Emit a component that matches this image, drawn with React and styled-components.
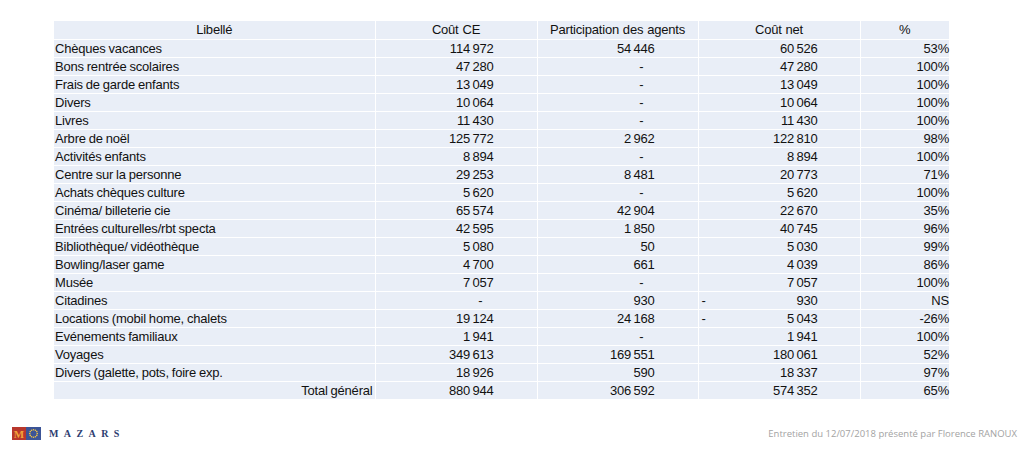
import React from "react";
import styled, { createGlobalStyle } from "styled-components";

const Global = createGlobalStyle`
  html, body { margin: 0; padding: 0; background: #ffffff; }
  body { font-family: "Liberation Sans", Arial, sans-serif; }
`;

const Page = styled.div`
  width: 1024px;
  height: 451px;
  box-sizing: border-box;
  padding: 21px 0 0 0;
  display: flex;
  flex-direction: column;
  overflow: hidden;
`;

const TableWrap = styled.div`
  padding-left: 54px;
`;

const Table = styled.table`
  border-collapse: collapse;
  table-layout: fixed;
  width: 895px;
  font-family: "Liberation Sans", Arial, sans-serif;
  font-size: 13px;
  letter-spacing: -0.2px;
  color: #111111;
`;

const Row = styled.tr`
  height: 18px;
`;

const Cell = styled.td`
  background: #e9eef7;
  border: 1px solid #ffffff;
  border-top: 0;
  padding: 0 ${(p) => p.$pr ?? 0}px 0 ${(p) => p.$pl ?? 0}px;
  height: 17px;
  line-height: 17px;
  text-align: ${(p) => p.$align || "left"};
  white-space: nowrap;
  overflow: visible;
  word-spacing: ${(p) => (p.$num ? "-1px" : "-0.5px")};
  &:first-child { border-left: 0; }
  &:last-child { border-right: 0; }
`;

const HeadCell = styled(Cell).attrs({ as: "th" })`
  font-weight: normal;
  text-align: center;
  word-spacing: 0.5px;
`;

const Dash = styled.span`
  display: inline-block;
  margin-right: 11px;
`;

const Neg = styled.div`
  display: flex;
  justify-content: space-between;
  padding-left: 3px;
`;

const Footer = styled.div`
  margin-top: 27px;
  display: flex;
  align-items: center;
  justify-content: space-between;
  padding: 0 7px 0 12px;
`;

const Logo = styled.div`
  display: flex;
  align-items: center;
  gap: 8px;
`;

const LogoWord = styled.span`
  font-family: "Liberation Serif", "Times New Roman", serif;
  font-weight: bold;
  font-size: 10px;
  letter-spacing: 5.4px;
  color: #2d3d70;
`;

const Credit = styled.span`
  font-family: "Open Sans", "Liberation Sans", sans-serif;
  font-size: 9.5px;
  color: #a3a3a3;
`;

const rows = [
  ["Chèques vacances", "114 972", "54 446", "60 526", "53%"],
  ["Bons rentrée scolaires", "47 280", "-", "47 280", "100%"],
  ["Frais de garde enfants", "13 049", "-", "13 049", "100%"],
  ["Divers", "10 064", "-", "10 064", "100%"],
  ["Livres", "11 430", "-", "11 430", "100%"],
  ["Arbre de noël", "125 772", "2 962", "122 810", "98%"],
  ["Activités enfants", "8 894", "-", "8 894", "100%"],
  ["Centre sur la personne", "29 253", "8 481", "20 773", "71%"],
  ["Achats chèques culture", "5 620", "-", "5 620", "100%"],
  ["Cinéma/ billeterie cie", "65 574", "42 904", "22 670", "35%"],
  ["Entrées culturelles/rbt specta", "42 595", "1 850", "40 745", "96%"],
  ["Bibliothèque/ vidéothèque", "5 080", "50", "5 030", "99%"],
  ["Bowling/laser game", "4 700", "661", "4 039", "86%"],
  ["Musée", "7 057", "-", "7 057", "100%"],
  ["Citadines", "-", "930", "-930", "NS"],
  ["Locations (mobil home, chalets", "19 124", "24 168", "-5 043", "-26%"],
  ["Evénements familiaux", "1 941", "-", "1 941", "100%"],
  ["Voyages", "349 613", "169 551", "180 061", "52%"],
  ["Divers (galette, pots, foire exp.", "18 926", "590", "18 337", "97%"],
];

function Num({ v }) {
  if (v === "-") return <Dash>-</Dash>;
  if (v.startsWith("-")) {
    return (
      <Neg>
        <span>-</span>
        <span>{v.slice(1)}</span>
      </Neg>
    );
  }
  return v;
}

function MazarsMark() {
  const stars = Array.from({ length: 12 }, (_, i) => {
    const a = (i / 12) * Math.PI * 2;
    return [21.5 + Math.cos(a) * 3.8, 6.5 + Math.sin(a) * 3.8];
  });
  return (
    <svg width="29" height="13" viewBox="0 0 29 13">
      <rect x="0" y="0" width="14" height="13" fill="#b8372c" />
      <rect x="14" y="0" width="15" height="13" fill="#3b5497" />
      <text
        x="7"
        y="10.5"
        textAnchor="middle"
        fontFamily="Liberation Serif, serif"
        fontWeight="bold"
        fontSize="11"
        fill="#f2a43a"
      >
        M
      </text>
      {stars.map(([x, y], i) => (
        <circle key={i} cx={x} cy={y} r="0.8" fill="#f3c742" />
      ))}
    </svg>
  );
}

export default function App() {
  return (
    <>
      <Global />
      <Page>
        <TableWrap>
          <Table>
            <colgroup>
              <col style={{ width: 321 }} />
              <col style={{ width: 162 }} />
              <col style={{ width: 161 }} />
              <col style={{ width: 162 }} />
              <col style={{ width: 89 }} />
            </colgroup>
            <thead>
              <Row>
                <HeadCell>Libellé</HeadCell>
                <HeadCell>Coût CE</HeadCell>
                <HeadCell>Participation des agents</HeadCell>
                <HeadCell>Coût net</HeadCell>
                <HeadCell>%</HeadCell>
              </Row>
            </thead>
            <tbody>
              {rows.map((r) => (
                <Row key={r[0]}>
                  <Cell $pl={1}>{r[0]}</Cell>
                  <Cell $num $align="right" $pr={43}><Num v={r[1]} /></Cell>
                  <Cell $num $align="right" $pr={43}><Num v={r[2]} /></Cell>
                  <Cell $num $align="right" $pr={42}><Num v={r[3]} /></Cell>
                  <Cell $align="right" $pr={0}>{r[4]}</Cell>
                </Row>
              ))}
              <Row>
                <Cell $align="right" $pr={2}>Total général</Cell>
                <Cell $num $align="right" $pr={43}>880 944</Cell>
                <Cell $num $align="right" $pr={43}>306 592</Cell>
                <Cell $num $align="right" $pr={42}>574 352</Cell>
                <Cell $align="right" $pr={0}>65%</Cell>
              </Row>
            </tbody>
          </Table>
        </TableWrap>
        <Footer>
          <Logo>
            <MazarsMark />
            <LogoWord>MAZARS</LogoWord>
          </Logo>
          <Credit>Entretien du 12/07/2018 présenté par Florence RANOUX</Credit>
        </Footer>
      </Page>
    </>
  );
}
